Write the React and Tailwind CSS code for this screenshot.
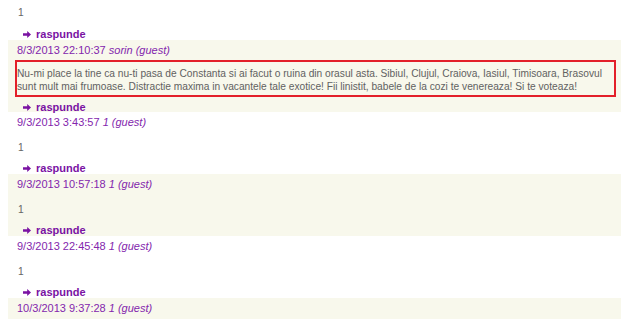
import React from "react";

const Arrow = () => (
  <svg width="8" height="7" viewBox="0 0 8 7" className="shrink-0" aria-hidden="true">
    <path d="M0 2.3h4.2V0L8 3.5 4.2 7V4.7H0z" fill="#7a12a3" />
  </svg>
);

const Reply = ({ mt }) => (
  <div className={`flex h-[13px] items-center pl-[15px] ${mt}`}>
    <div className="flex h-[14px] items-center gap-[5px] leading-[14px]">
      <span className="mt-[1px]"><Arrow /></span>
      <span className="text-[11px] font-bold text-[#7a12a3]">raspunde</span>
    </div>
  </div>
);

const DateLine = ({ date, author }) => (
  <div className="h-[20px] pl-[9px] text-[11px] leading-[20px] text-[#8326ad]">
    {date} <span className="italic">{author} (guest)</span>
  </div>
);

const Plain = ({ date, author, bg }) => (
  <div className={`h-[62px] ${bg}`}>
    <DateLine date={date} author={author} />
    <div className="mt-[8px] h-[15px] pl-[10px] text-[10.2px] leading-[15px] text-[#666666]">1</div>
    <Reply mt="mt-[6px]" />
  </div>
);

export default function App() {
  return (
    <div
      className="min-h-[319px] bg-white"
      style={{ fontFamily: '"Liberation Sans", Arial, sans-serif' }}
    >
      <div className="ml-[8px] w-[613px]">
        <div className="h-[40px] bg-white pt-[5px]">
          <div className="h-[15px] pl-[10px] text-[10.2px] leading-[15px] text-[#666666]">1</div>
          <Reply mt="mt-[7px]" />
        </div>

        <div className="h-[72px] bg-[#f8f8ec]">
          <DateLine date="8/3/2013 22:10:37" author="sorin" />
          <div className="ml-[7px] mr-[5px] h-[37px] border-2 border-[#e3202a] pt-[5px] pb-[2px] text-[10.2px] leading-[13px] text-[#616161]">
            Nu-mi place la tine ca nu-ti pasa de Constanta si ai facut o ruina din orasul asta. Sibiul, Clujul, Craiova, Iasiul, Timisoara, Brasovul sunt mult mai frumoase. Distractie maxima in vacantele tale exotice! Fii linistit, babele de la cozi te venereaza! Si te voteaza!
          </div>
          <Reply mt="mt-[3px]" />
        </div>

        <Plain date="9/3/2013 3:43:57" author="1" bg="bg-white" />
        <Plain date="9/3/2013 10:57:18" author="1" bg="bg-[#f8f8ec]" />
        <Plain date="9/3/2013 22:45:48" author="1" bg="bg-white" />
        <Plain date="10/3/2013 9:37:28" author="1" bg="bg-[#f8f8ec]" />
      </div>
    </div>
  );
}
